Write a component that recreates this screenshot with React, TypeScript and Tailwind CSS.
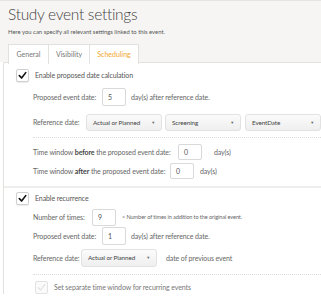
import React from "react";

function Check({ disabled = false }: { disabled?: boolean }) {
  return (
    <div
      className={
        "flex h-[13px] w-[13px] shrink-0 items-center justify-center rounded-[2px] border " +
        (disabled ? "border-[#e2e2e2] bg-[#fafafa]" : "border-[#cfcfcf] bg-white shadow-[0_1px_1px_rgba(0,0,0,0.08)]")
      }
    >
      <svg width="9" height="9" viewBox="0 0 10 10">
        <path
          d="M1.5 5.2 L4 7.8 L8.6 1.8"
          fill="none"
          stroke={disabled ? "#e0e0e0" : "#111"}
          strokeWidth={disabled ? 1.2 : 1.8}
          strokeLinecap="round"
          strokeLinejoin="round"
        />
      </svg>
    </div>
  );
}

function Field({ value, h = "h-[18px]" }: { value: string; h?: string }) {
  return (
    <div className={`flex w-[24px] shrink-0 items-center rounded-[2px] border border-[#d9d9d9] bg-white pl-[5px] text-[7px] text-[#555] ${h}`}>
      {value}
    </div>
  );
}

function Select({ label, w = "w-[77px]", h = "h-[17px]" }: { label: string; w?: string; h?: string }) {
  return (
    <div
      className={`flex shrink-0 items-center justify-between rounded-[3px] border border-[#e2e2e2] bg-gradient-to-b from-[#fbfbfb] to-[#efefef] px-[6px] text-[6.3px] tracking-[-0.1px] text-[#444] ${w} ${h}`}
    >
      <span>{label}</span>
      <span className="text-[4px] text-[#666]">▼</span>
    </div>
  );
}

export default function App() {
  return (
    <div className="h-[300px] w-[321px] overflow-hidden whitespace-nowrap bg-white font-['Lato','Open_Sans',sans-serif] text-[#666]">
      {/* header */}
      <div className="h-[62px] border-t border-[#e6e4e1] bg-[#f6f5f3] pl-[8px]">
        <h1 className="pt-[3px] text-[15.5px] font-light leading-[20px] tracking-[-0.3px] text-[#444]">
          Study event settings
        </h1>
        <p className="mt-[4px] text-[5.9px] leading-[8px] text-[#555]">
          Here you can specify all relevant settings linked to this event.
        </p>
        <div className="mt-[8px] flex h-[20px] text-[7px]">
          <div className="flex w-[41px] items-center justify-center border border-b-0 border-[#e3e1de] bg-white text-[#777]">
            General
          </div>
          <div className="flex w-[41px] items-center justify-center border border-b-0 border-l-0 border-[#e3e1de] bg-white text-[#777]">
            Visibility
          </div>
          <div className="flex w-[49px] items-center justify-center border border-b-0 border-l-0 border-[#e3e1de] bg-white text-[#f0a52c]">
            Scheduling
          </div>
        </div>
      </div>

      {/* panel */}
      <div className="ml-[3px] border-l border-t border-[#e3e1de] text-[7px] tracking-[-0.1px]">
        {/* section 1 */}
        <div className="pl-[12px]">
          <div className="flex h-[25px] items-center gap-[6px] text-[#555]">
            <Check />
            <span>Enable proposed date calculation</span>
          </div>
          <div className="pl-[17px]">
            <div className="flex h-[18px] items-center">
              <span className="w-[69px]">Proposed event date:</span>
              <Field value="5" />
              <span className="ml-[5px]">day(s) after reference date.</span>
            </div>
            <div className="mt-[8px] flex h-[17px] items-center">
              <span className="w-[54px]">Reference date:</span>
              <Select label="Actual or Planned" w="w-[76px]" />
              <div className="ml-[3px]">
                <Select label="Screening" w="w-[76px]" />
              </div>
              <div className="ml-[4px]">
                <Select label="EventDate" w="w-[76px]" />
              </div>
            </div>
            <div className="mt-[6px] border-t border-dotted border-[#dcdcdc]" />
            <div className="mt-[6px] flex h-[16px] items-center">
              <span className="w-[145px]">
                Time window <b className="text-[#444]">before</b> the proposed event date:
              </span>
              <Field value="0" h="h-[16px]" />
              <span className="ml-[12px]">day(s)</span>
            </div>
            <div className="mt-[3px] flex h-[16px] items-center">
              <span className="w-[137px]">
                Time window <b className="text-[#444]">after</b> the proposed event date:
              </span>
              <Field value="0" h="h-[16px]" />
              <span className="ml-[6px]">day(s)</span>
            </div>
          </div>
        </div>
        <div className="mt-[7px] h-[2px] bg-[#efeeec]" />

        {/* section 2 */}
        <div className="pl-[12px]">
          <div className="flex h-[21px] items-center gap-[6px] text-[#555]">
            <Check />
            <span>Enable recurrence</span>
          </div>
          <div className="pl-[17px]">
            <div className="flex h-[17px] items-center">
              <span className="w-[59px]">Number of times:</span>
              <Field value="9" h="h-[17px]" />
              <span className="ml-[6px] text-[5.6px]">&lt; Number of times in addition to the original event.</span>
            </div>
            <div className="mt-[1px] flex h-[18px] items-center">
              <span className="w-[69px]">Proposed event date:</span>
              <Field value="1" />
              <span className="ml-[5px]">day(s) after reference date.</span>
            </div>
            <div className="mt-[4px] flex h-[18px] items-center">
              <span className="w-[48px]">Reference date:</span>
              <Select label="Actual or Planned" w="w-[76px]" h="h-[18px]" />
              <span className="ml-[9px]">date of previous event</span>
            </div>
            <div className="mt-[7px] border-t border-dotted border-[#dcdcdc]" />
            <div className="mt-[6px] flex h-[13px] items-center gap-[6px] pl-[2px] text-[#777]">
              <Check disabled />
              <span>Set separate time window for recurring events</span>
            </div>
          </div>
        </div>
      </div>
    </div>
  );
}
